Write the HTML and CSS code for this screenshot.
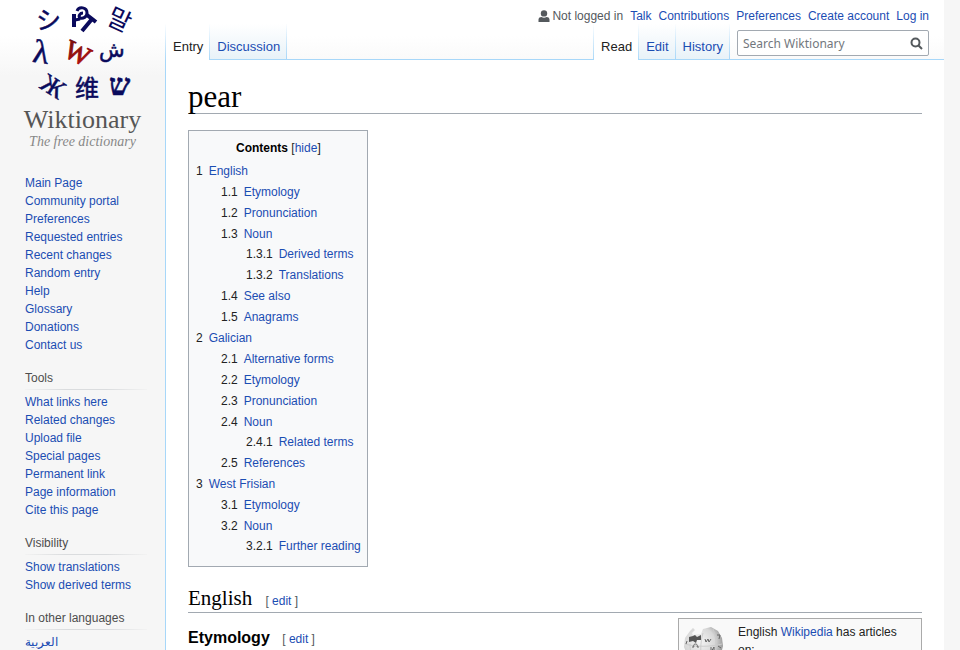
FILE: index.html
```html
<!DOCTYPE html>
<html lang="en">
<head>
<meta charset="utf-8">
<title>pear - Wiktionary</title>
<link rel="stylesheet" href="styles.css">
</head>
<body>
<div class="page">
  <aside class="sidebar">
    <a class="logo" href="#">
      <svg class="logo-glyphs" viewBox="0 0 165 106" aria-hidden="true">
        <defs><linearGradient id="red" x1="0" y1="0" x2="1" y2="1"><stop offset="0" stop-color="#6a1010"/><stop offset="1" stop-color="#c01010"/></linearGradient></defs>
        <g class="ink">
          <text x="36" y="29" font-size="25" class="cjk">シ</text>
          <g fill="none" stroke="#0a0a5c">
            <path d="M74 14v13M87 15l9 7M92 19L82 31" stroke-width="4"/>
            <path d="M75 20l5-1M77 11c2-5 10-4 10 2 0 4-4 6-7 5-2-2 0-5 3-5" stroke-width="3"/>
          </g>
          <text x="108" y="29" font-size="25" class="cjk thin" transform="rotate(25 120 20)">말</text>
          <text x="33" y="63" font-size="33" class="serif" transform="rotate(8 41 53)">λ</text>
          <text x="99" y="57" font-size="21" class="arabic">ش</text>
          <text x="41" y="95" font-size="26" class="serif" transform="rotate(32 53 87)">Ж</text>
          <text x="75" y="97" font-size="24" class="cjk">维</text>
          <text x="109" y="95" font-size="30" class="hebrew">ש</text>
        </g>
        <text x="65" y="62" font-size="27" class="serif w" transform="rotate(26 78 53)">W</text>
      </svg>
      <span class="wordmark">Wiktionary</span>
      <span class="tagline">The free dictionary</span>
    </a>
    <nav class="portal first" aria-label="Navigation">
      <ul>
        <li><a href="#">Main Page</a></li>
        <li><a href="#">Community portal</a></li>
        <li><a href="#">Preferences</a></li>
        <li><a href="#">Requested entries</a></li>
        <li><a href="#">Recent changes</a></li>
        <li><a href="#">Random entry</a></li>
        <li><a href="#">Help</a></li>
        <li><a href="#">Glossary</a></li>
        <li><a href="#">Donations</a></li>
        <li><a href="#">Contact us</a></li>
      </ul>
    </nav>
    <nav class="portal">
      <h3>Tools</h3>
      <ul>
        <li><a href="#">What links here</a></li>
        <li><a href="#">Related changes</a></li>
        <li><a href="#">Upload file</a></li>
        <li><a href="#">Special pages</a></li>
        <li><a href="#">Permanent link</a></li>
        <li><a href="#">Page information</a></li>
        <li><a href="#">Cite this page</a></li>
      </ul>
    </nav>
    <nav class="portal">
      <h3>Visibility</h3>
      <ul>
        <li><a href="#">Show translations</a></li>
        <li><a href="#">Show derived terms</a></li>
      </ul>
    </nav>
    <nav class="portal">
      <h3>In other languages</h3>
      <ul>
        <li><a href="#" lang="ar">العربية</a></li>
      </ul>
    </nav>
  </aside>
  <div class="main">
    <header class="head">
      <ul class="personal">
        <li class="anon">
          <svg class="user-icon" viewBox="0 0 12 13" aria-hidden="true"><circle cx="6" cy="3.4" r="3.2"/><path d="M0.5 12V9.6C.5 7.8 2 7 3.4 7c1.700 1 3.500 1 5.200 0 1.400 0 2.900.8 2.900 2.600V12z"/></svg>
          Not logged in
        </li>
        <li><a href="#">Talk</a></li>
        <li><a href="#">Contributions</a></li>
        <li><a href="#">Preferences</a></li>
        <li><a href="#">Create account</a></li>
        <li><a href="#">Log in</a></li>
      </ul>
      <div class="bar">
        <nav class="tabs lead">
          <a class="tab selected" href="#">Entry</a>
          <a class="tab" href="#">Discussion</a>
        </nav>
        <div class="spacer"></div>
        <nav class="tabs">
          <a class="tab selected" href="#">Read</a>
          <a class="tab" href="#">Edit</a>
          <a class="tab" href="#">History</a>
        </nav>
        <form class="search">
          <div class="search-box">
            <input type="search" placeholder="Search Wiktionary" aria-label="Search Wiktionary">
            <button type="button" aria-label="Search"><svg viewBox="0 0 13 13"><circle cx="5.500" cy="5.500" r="4" /><path d="M8.500 8.500l3.500 3.500"/></svg></button>
          </div>
        </form>
      </div>
    </header>
    <main class="content">
      <h1>pear</h1>
      <div class="toc">
        <div class="toc-title"><h2>Contents</h2> [<a href="#">hide</a>]</div>
        <ul>
          <li><span>1</span><a href="#">English</a>
            <ul>
              <li><span>1.1</span><a href="#">Etymology</a></li>
              <li><span>1.2</span><a href="#">Pronunciation</a></li>
              <li><span>1.3</span><a href="#">Noun</a>
                <ul>
                  <li><span>1.3.1</span><a href="#">Derived terms</a></li>
                  <li><span>1.3.2</span><a href="#">Translations</a></li>
                </ul>
              </li>
              <li><span>1.4</span><a href="#">See also</a></li>
              <li><span>1.5</span><a href="#">Anagrams</a></li>
            </ul>
          </li>
          <li><span>2</span><a href="#">Galician</a>
            <ul>
              <li><span>2.1</span><a href="#">Alternative forms</a></li>
              <li><span>2.2</span><a href="#">Etymology</a></li>
              <li><span>2.3</span><a href="#">Pronunciation</a></li>
              <li><span>2.4</span><a href="#">Noun</a>
                <ul>
                  <li><span>2.4.1</span><a href="#">Related terms</a></li>
                </ul>
              </li>
              <li><span>2.5</span><a href="#">References</a></li>
            </ul>
          </li>
          <li><span>3</span><a href="#">West Frisian</a>
            <ul>
              <li><span>3.1</span><a href="#">Etymology</a></li>
              <li><span>3.2</span><a href="#">Noun</a>
                <ul>
                  <li><span>3.2.1</span><a href="#">Further reading</a></li>
                </ul>
              </li>
            </ul>
          </li>
        </ul>
      </div>
      <h2 class="lang-head">English <small>[ <a href="#">edit</a> ]</small></h2>
      <div class="section">
        <h3 class="sub-head">Etymology <small>[ <a href="#">edit</a> ]</small></h3>
        <div class="sister">
          <svg class="globe" viewBox="0 0 40 38" aria-hidden="true">
            <defs><radialGradient id="ball" cx=".4" cy=".4" r=".65"><stop offset="0" stop-color="#f4f4f4"/><stop offset=".6" stop-color="#d8d8d8"/><stop offset="1" stop-color="#909090"/></radialGradient></defs>
            <path d="M7 4l3-3 2 2-3 3 1 2 8-1 2-5 8-2 7 4 4 7 1 8-2 8-7 7-9 3-10-2-7-6-4-9 1-9z" fill="url(#ball)"/>
            <path d="M6 10l4-1 2-1 2 2 4-2v5l-4 0-1 3-3-2-4 1z" fill="#555"/>
            <g fill="none" stroke="#ccc"><path d="M2 17c10 3 26 3 37 0M20 6c-3 10-3 22 0 31M30 2c4 9 4 22 0 32M7 17c0 6 1 12 5 17M4 27c10 3 22 3 33 0"/></g>
            <g fill="none" stroke="#666"><path d="M9 20h2c-2-4 5-4 3 0h2M22 12l1 3 2-3 1 3 2-3M28 20v5l3-5v5M34 8h3l-1 4M35 19l3 2M3 17l1-3"/></g>
          </svg>
          <p>English <a href="#">Wikipedia</a> has articles on:</p>
        </div>
      </div>
    </main>
  </div>
</div>
</body>
</html>
```
FILE: styles.css
```css
* {
  box-sizing: border-box;
}

html {
  height: 100%;
  overflow: hidden;
}

body {
  height: 100%;
  margin: 0;
  overflow: hidden;
  background: #f6f6f6;
  color: #222;
  font: 12px/21px "Liberation Sans", Arial, sans-serif;
}

a {
  color: #1b4db3;
  text-decoration: none;
}

ul {
  list-style: none;
  margin: 0;
  padding: 0;
}

.page {
  display: flex;
  margin-right: 16px;
  background: linear-gradient(#fff 36px, #f6f6f6 76px);
}

/* Sidebar */
.sidebar {
  flex: none;
  width: 165px;
  line-height: 18px;
}

.logo {
  display: flex;
  flex-direction: column;
  align-items: center;
  height: 160px;
}

.logo-glyphs {
  width: 165px;
  height: 106px;
}

.ink {
  fill: #0a0a5c;
  stroke: #0a0a5c;
  stroke-width: 0.5;
}

.w {
  fill: url(#red);
  stroke: url(#red);
}

.cjk {
  font-family: "Noto Sans CJK JP", sans-serif;
}

.thin {
  stroke: none;
}

.serif {
  font-family: "Liberation Serif", serif;
}

.arabic {
  font-family: "DejaVu Sans", sans-serif;
}

.hebrew {
  font-family: "Liberation Serif", serif;
  font-weight: bold;
}

.wordmark {
  color: #555;
  font: 26px/28px "Liberation Serif", serif;
}

.tagline {
  color: #888;
  font: italic 14px/16px "Liberation Serif", serif;
}

.portal {
  padding: 0 18px 0 25px;
  margin-bottom: 15px;
}

.portal.first {
  margin-top: 14px;
}

.portal h3 {
  margin: 0;
  padding-bottom: 2px;
  border-bottom: 1px solid;
  border-image: linear-gradient(90deg, #f3f3f3, #dadcde 33%, #dadcde 66%, #f3f3f3) 1;
  color: #4d4d4d;
  font-size: 12px;
  font-weight: normal;
}

.portal h3 + ul {
  padding-top: 3px;
}

/* Header */
.main {
  flex: 1;
  min-width: 0;
}

.head {
  padding-top: 8px;
}

.personal {
  display: flex;
  justify-content: flex-end;
  gap: 7px;
  padding-right: 15px;
  line-height: 16px;
}

.anon {
  display: flex;
  align-items: center;
  gap: 2px;
  color: #54595d;
}

.user-icon {
  width: 12px;
  height: 13px;
  fill: #54595d;
}

.bar {
  display: flex;
  height: 36px;
}

.tabs {
  display: flex;
  border-left: 1px solid;
  border-image: linear-gradient(#fff0, #a7d7f9) 1;
}

.tab {
  padding: 12px 6px 0 7px;
  border-right: 1px solid;
  border-bottom: 1px solid;
  border-image: linear-gradient(#fff0, #a7d7f9) 1;
  background: linear-gradient(#fff, #e8f2f8);
  font-size: 13px;
  line-height: 22px;
}

.tab.selected {
  border-bottom: 0;
  background: #fff;
  color: #222;
}

.spacer {
  flex: 1;
  border-bottom: 1px solid #a7d7f9;
}

.search {
  border-bottom: 1px solid #a7d7f9;
  padding: 6px 15px 0 7px;
}

.search-box {
  display: flex;
  align-items: center;
  width: 192px;
  height: 26px;
  border: 1px solid #a2a9b1;
  border-radius: 2px;
  background: #fffc;
}

.search input {
  flex: 1;
  min-width: 0;
  padding: 0 5px;
  border: 0;
  outline: 0;
  background: none;
  font: 12px "Noto Sans", sans-serif;
}

.search input::placeholder {
  color: #72777d;
}

.search button {
  display: flex;
  padding: 0 5px;
  border: 0;
  background: none;
}

.search svg {
  width: 13px;
  height: 13px;
  fill: none;
  stroke: #54595d;
  stroke-width: 2;
}

/* Article */
.content {
  padding: 20px 22px 24px;
  border-left: 1px solid #a7d7f9;
  background: #fff;
}

h1 {
  margin: 0 0 16px;
  border-bottom: 1px solid #a2a9b1;
  color: #000;
  font: 31px/33px "Liberation Serif", serif;
}

.toc {
  width: fit-content;
  padding: 7px 6px 9px 7px;
  border: 1px solid #a2a9b1;
  background: #f8f9fa;
}

.toc-title {
  text-align: center;
  margin-bottom: 2px;
}

.toc-title h2 {
  display: inline;
  margin: 0;
  color: #000;
  font-size: 12px;
}

.toc span {
  margin-right: 6px;
}

.toc ul ul {
  padding-left: 25px;
}

.toc ul ul ul {
  margin-top: -1px;
}

.lang-head {
  margin: 17px 0 5px;
  border-bottom: 1px solid #a2a9b1;
  color: #000;
  font: 21px/28px "Liberation Serif", serif;
}

.lang-head small,
.sub-head small {
  margin-left: 8px;
  color: #54595d;
  font: 12px "Liberation Sans", Arial, sans-serif;
}

.section {
  display: flex;
  justify-content: space-between;
  align-items: flex-start;
}

.sub-head {
  margin: 8px 0;
  color: #000;
  font-size: 16px;
  line-height: 24px;
}

.sister {
  display: flex;
  gap: 15px;
  width: 244px;
  padding: 4px;
  border: 1px solid #aaa;
  background: #f9f9f9;
}

.sister p {
  width: 168px;
  margin: 0;
  padding-right: 4px;
  line-height: 18px;
}

.globe {
  flex: none;
  width: 40px;
  height: 38px;
  margin-top: 4px;
}
```
